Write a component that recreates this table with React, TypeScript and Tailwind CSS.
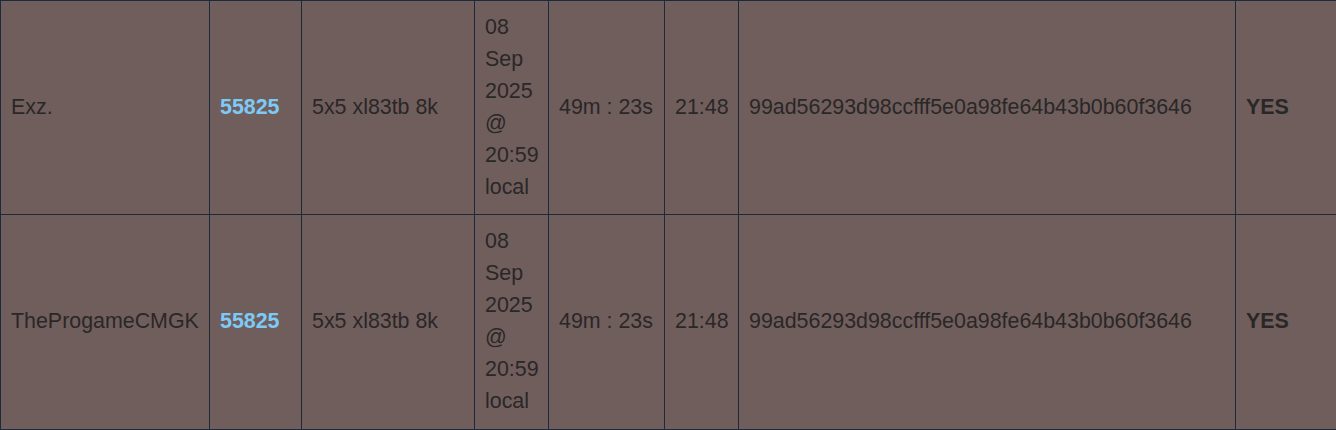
import React from "react";

const rows = [
  { name: "Exz." },
  { name: "TheProgameCMGK" },
];

const cell = "border border-[#1c2a3b] px-[10px] pt-[10px] pb-[11.3px] align-middle";

export default function App() {
  return (
    <div className="w-[1336px] h-[430px] overflow-hidden bg-[#2c3a48]">
      <table
        className="border-collapse table-fixed w-[1342px] bg-[#705e5d] text-[#2a2727] text-[21.4px] leading-[32px]"
        style={{ fontFamily: '"Liberation Sans", Arial, sans-serif' }}
      >
        <colgroup>
          <col className="w-[209px]" />
          <col className="w-[92px]" />
          <col className="w-[173px]" />
          <col className="w-[74px]" />
          <col className="w-[116px]" />
          <col className="w-[74px]" />
          <col className="w-[497px]" />
          <col className="w-[107px]" />
        </colgroup>
        <tbody>
          {rows.map((r) => (
            <tr key={r.name}>
              <td className={cell}>{r.name}</td>
              <td className={cell}>
                <a className="font-bold text-[#7dcaf6]">55825</a>
              </td>
              <td className={cell}>5x5 xl83tb 8k</td>
              <td className={cell}>08 Sep 2025 @ 20:59 local</td>
              <td className={cell}>49m : 23s</td>
              <td className={cell}>21:48</td>
              <td className={cell}>99ad56293d98ccfff5e0a98fe64b43b0b60f3646</td>
              <td className={cell + " font-bold"}>YES</td>
            </tr>
          ))}
        </tbody>
      </table>
    </div>
  );
}
